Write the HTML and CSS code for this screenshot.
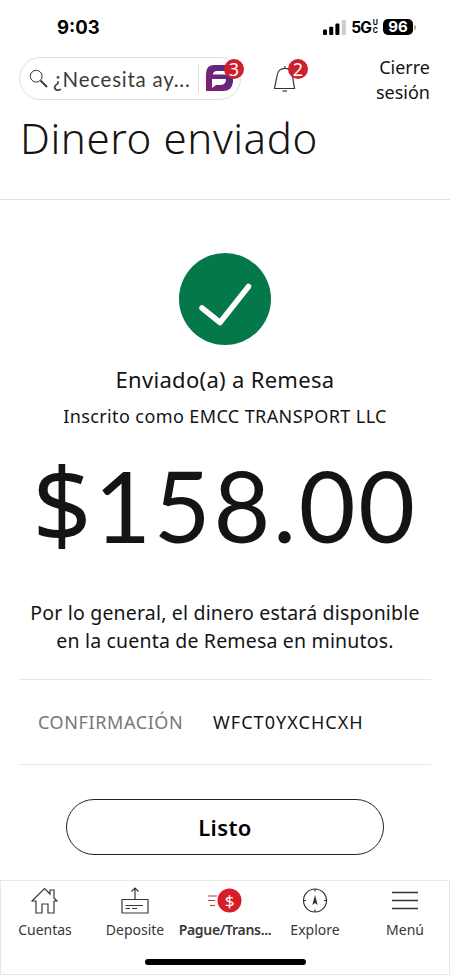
FILE: index.html
```html
<!DOCTYPE html>
<html lang="es">
<head>
<meta charset="utf-8">
<meta name="viewport" content="width=device-width, initial-scale=1">
<title>Dinero enviado</title>
<link rel="stylesheet" href="styles.css">
</head>
<body>
<div class="screen">
  <div class="status">
    <span class="time">9:03</span>
    <div class="indicators">
      <svg class="signal" width="24" height="15" viewBox="0 0 24 15"><rect x="0" y="9.5" width="4" height="5.5" rx="1"/><rect x="6.2" y="6.8" width="4" height="8.2" rx="1"/><rect x="12.4" y="3.6" width="4" height="11.4" rx="1"/><rect x="18.8" y="0" width="4" height="15" rx="1" fill="#ccc"/></svg>
      <span class="net">5G</span><span class="uc"><i>U</i><i>C</i></span>
      <span class="battery">96</span><span class="cap"></span>
    </div>
  </div>
  <header class="top">
    <div class="search">
      <svg class="glass" width="20" height="20" viewBox="0 0 20 20" fill="none" stroke="#333"><circle cx="7.2" cy="7.2" r="5.9" stroke-width="1"/><path d="M11.5 11.5L18 18" stroke-width="1.8"/></svg>
      <span class="hint">¿Necesita ay...</span>
      <span class="split"></span>
      <svg class="fargo" width="27" height="27" viewBox="0 0 27 27"><defs><linearGradient id="g" x1="0" y1="1" x2="1" y2="0"><stop offset="0" stop-color="#85206e"/><stop offset="1" stop-color="#4f2a87"/></linearGradient></defs><path d="M8 0H27V6H11Q7 6 7 9.500H27V17Q26 26 17 26H0V9Q0 0 8 0Z" fill="url(#g)"/><path d="M6 14H20Q20 20 14 20H10L6 23Z" fill="#fff"/></svg>
      <span class="badge badge-chat">3</span>
    </div>
    <div class="bell">
      <svg width="24" height="28" viewBox="0 0 24 28" fill="none" stroke="#333" stroke-width="1.2"><path d="M12 1V3M1.500 23.500H21.500L19.500 11C19 6 16 3.300 12 3.300S4.500 6 4 11Z"/><path d="M9.500 26H14"/></svg>
      <span class="badge badge-bell">2</span>
    </div>
    <div class="logout">Cierre<br>sesión</div>
  </header>
  <h1>Dinero enviado</h1>
  <main>
    <svg class="check" width="92" height="92" viewBox="0 0 92 92"><circle cx="46" cy="46" r="46" fill="#05784a"/><path d="M23 55L41 69.5L69.500 33.500" fill="none" stroke="#fff" stroke-width="5.500" stroke-linecap="round" stroke-linejoin="round"/></svg>
    <p class="sent">Enviado(a) a Remesa</p>
    <p class="registered">Inscrito como EMCC TRANSPORT LLC</p>
    <p class="amount"><span class="currency">$</span>158.00</p>
    <p class="note">Por lo general, el dinero estará disponible<br>en la cuenta de Remesa en minutos.</p>
    <div class="confirm"><span class="label">CONFIRMACIÓN</span><span class="code">WFCT0YXCHCXH</span></div>
    <button class="done">Listo</button>
  </main>
  <nav>
    <div class="tabs">
      <div class="tab"><svg width="28" height="28" viewBox="0 0 28 28" fill="none" stroke="#3b3637" stroke-width="1.2"><path d="M1 14L13.500 1.500L19 7V3H23V11L26 14H23V26H17V17H11V26H5V14Z"/></svg><span>Cuentas</span></div>
      <div class="tab"><svg width="28" height="28" viewBox="0 0 28 28" fill="none" stroke="#3b3637" stroke-width="1.2"><path d="M1 12.500H27V26H1ZM12 12.500M14 12V1M10.500 4.500L14 1L17.500 4.500M4.500 18.500H22M4.500 21.500H9M11 21.500H16"/></svg><span>Deposite</span></div>
      <div class="tab active"><svg class="pay" width="35" height="28" viewBox="0 0 35 28"><path d="M0 9H9M0 13.500H7M2 18.500H7" stroke="#b5354a" stroke-width="1.200"/><circle cx="21.500" cy="13.500" r="12" fill="#d71e28"/><text x="21.500" y="19.500" text-anchor="middle">$</text></svg><span>Pague/Trans...</span></div>
      <div class="tab"><svg width="28" height="28" viewBox="0 0 28 28" fill="none" stroke="#333" stroke-width="1.2"><circle cx="14" cy="13.500" r="11.500"/><path d="M14 2V4.500M14 22.500V25M2.500 13.500H5M23 13.500H25.500"/><path d="M14 8L16.700 18L14 16L11.300 18Z" fill="#333" stroke="none"/></svg><span>Explore</span></div>
      <div class="tab"><svg width="28" height="28" viewBox="0 0 28 28" stroke="#333" stroke-width="1.3"><path d="M1 5.500H27M1 13.500H27M1 21.500H27"/></svg><span>Menú</span></div>
    </div>
    <div class="home"></div>
  </nav>
</div>
</body>
</html>
```
FILE: styles.css
```css
* { box-sizing: border-box; }
body, h1, p { margin: 0; }
body { background: #fff; color: #141414; font-family: "Noto Sans", sans-serif; }
.screen { width: 450px; height: 975px; display: flex; flex-direction: column; overflow: hidden; }
.status { height: 54px; flex: none; display: flex; justify-content: space-between; padding: 15px 34px 0 57px; color: #000; font-family: Inter, sans-serif; font-weight: 700; }
.time { font-size: 18.500px; line-height: 24px; }
.indicators { display: flex; align-items: center; height: 24px; }
.net { font-size: 15.500px; margin-left: 4px; letter-spacing: -1px; }
.uc { display: flex; flex-direction: column; font-size: 7px; line-height: 8px; margin: 0 5px 0 2px; }
.uc i { font-style: normal; }
.battery { width: 30px; height: 16px; border-radius: 5px; background: #000; color: #fff; font-size: 15px; line-height: 16px; text-align: center; }
.cap { width: 2px; height: 5px; margin-left: 1px; background: #aaa; border-radius: 0 2px 2px 0; }
.top { height: 56px; flex: none; display: flex; padding: 3px 20px 0 19px; }
.search { position: relative; width: 222px; height: 43px; border: 1px solid #dedede; border-radius: 22px; display: flex; align-items: center; padding-left: 9px; }
.glass { flex: none; }
.hint { font-family: Lato, sans-serif; font-size: 20.500px; letter-spacing: .75px; color: #3b3b3b; white-space: nowrap; margin-left: 4px; width: 138px; }
.split { width: 1px; height: 29px; background: #ddd; margin: 0 7px; flex: none; }
.fargo { flex: none; }
.badge { position: absolute; width: 20px; height: 20px; border-radius: 50%; background: #cb202d; color: #fff; font-size: 18px; line-height: 20px; text-align: center; }
.badge-chat { left: 204px; top: 1px; }
.bell { position: relative; width: 36px; margin: 8px 0 0 32px; height: 30px; }
.badge-bell { left: 15px; top: -6px; }
.logout { margin-left: auto; text-align: right; font-size: 18px; line-height: 24.500px; margin-top: -2px; }
h1 { height: 90px; flex: none; border-bottom: 1px solid #e2e2e2; padding-left: 20px; font-weight: 300; font-size: 42px; letter-spacing: .6px; line-height: 56px; white-space: nowrap; }
main { flex: none; height: 680px; display: flex; flex-direction: column; align-items: center; padding-top: 53px; }
.check { flex: none; }
p { white-space: nowrap; text-align: center; }
.sent { font-size: 22px; letter-spacing: .3px; line-height: 30px; margin-top: 19px; }
.registered { font-size: 18px; letter-spacing: .4px; line-height: 24px; margin-top: 10px; }
.amount { font-family: Lato, sans-serif; font-size: 98px; letter-spacing: 2.700px; line-height: 120px; margin-top: 17px; }
.currency { font-family: "Noto Sans", sans-serif; font-size: 104px; line-height: 0; }
.note { font-size: 19.500px; letter-spacing: .18px; line-height: 28px; margin-top: 34px; }
.confirm { width: 412px; height: 86px; flex: none; margin-top: 24px; border: solid #e7e7e7; border-width: 1px 0; display: flex; align-items: center; padding-left: 19px; font-size: 18px; white-space: nowrap; }
.label { width: 175px; color: #777; letter-spacing: .6px; }
.code { letter-spacing: 1.050px; }
.done { width: 318px; height: 56px; flex: none; margin-top: 34px; border: 1.500px solid #222; border-radius: 28px; background: #fff; color: #000; font: 600 22px "Noto Sans", sans-serif; letter-spacing: .4px; }
nav { flex: none; height: 95px; border: 1px solid #e8e8e8; display: flex; flex-direction: column; align-items: center; }
.tabs { width: 100%; display: grid; grid-template-columns: repeat(5, 90px); justify-content: center; padding-top: 6px; }
.tab { display: flex; flex-direction: column; align-items: center; color: #3b3637; font-size: 14px; line-height: 20px; white-space: nowrap; }
.tab span { margin-top: 5px; }
.active { font-weight: 600; letter-spacing: -.3px; }
.pay text { font: 400 17px "Noto Sans", sans-serif; fill: #fff; }
.home { width: 161px; height: 6px; border-radius: 3px; background: #000; margin-top: 19px; }
```
